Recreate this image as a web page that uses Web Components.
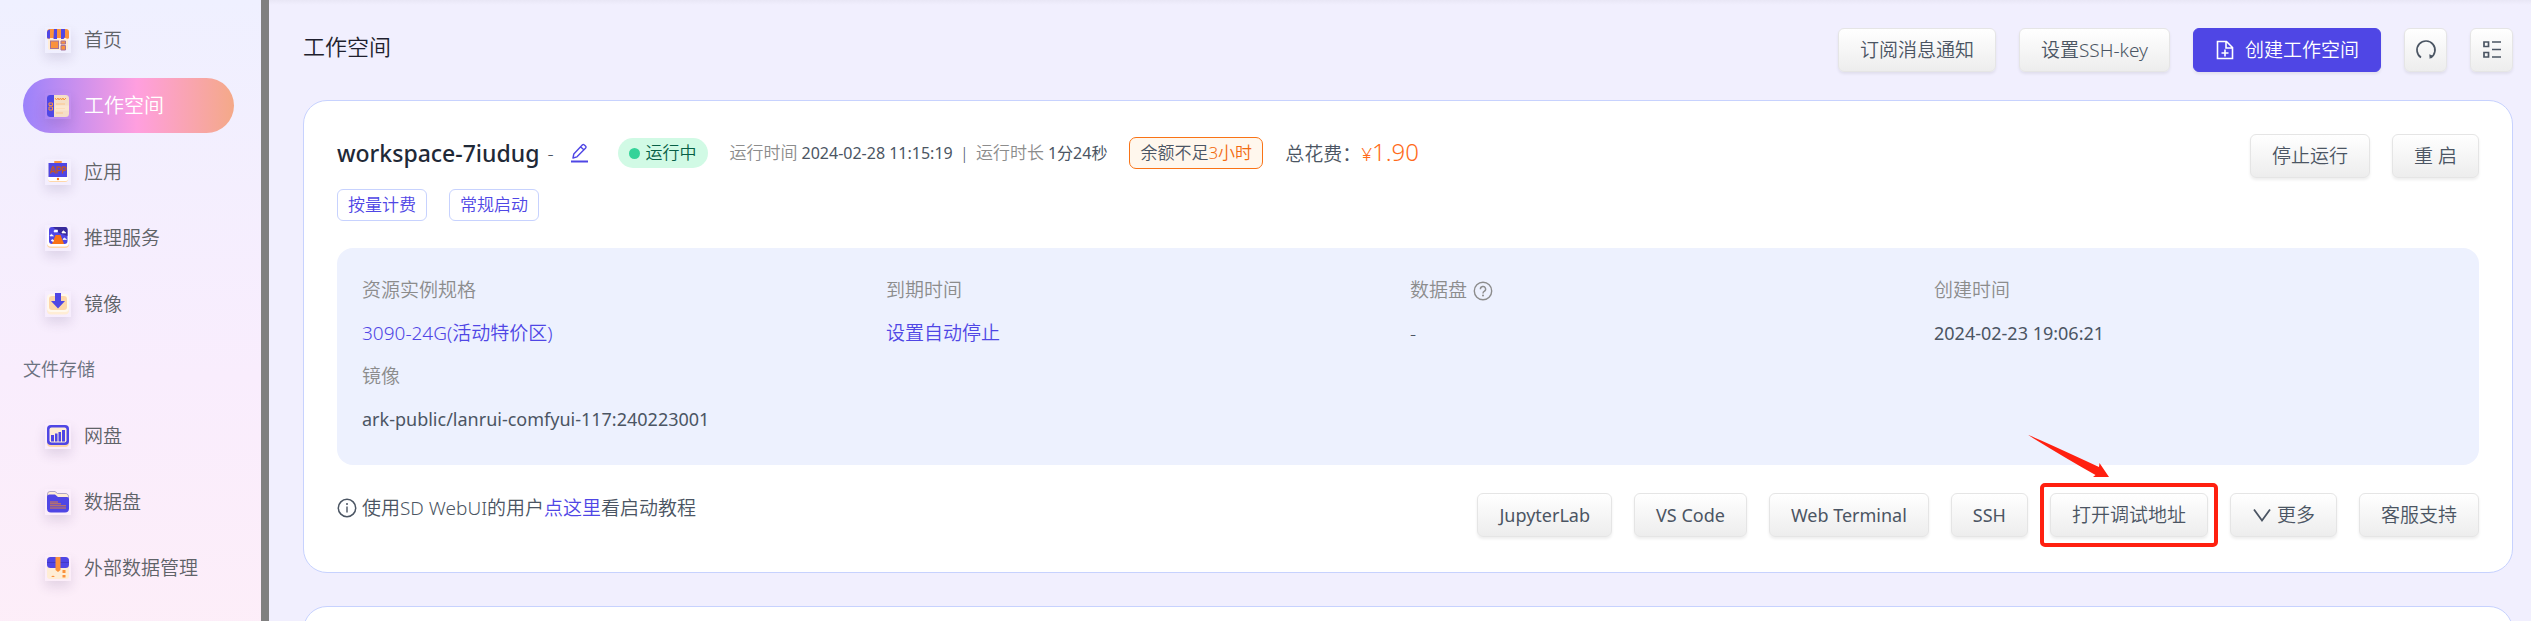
<!DOCTYPE html>
<html lang="zh-CN">
<head>
<meta charset="utf-8">
<title>工作空间</title>
<style>
  html, body { margin: 0; height: 100%; }
  body {
    font-family: "Noto Sans", "Noto Sans CJK SC", sans-serif;
    font-size: 19px; line-height: 28px; font-weight: 350; color: #4b5563;
    --brand: #4f46e5; --line: #c7d2fe; --muted: #8c8c8c;
    overflow: hidden;
  }
</style>
</head>
<body>
<app-shell></app-shell>
<script>
const define = (name, html, setup) => {
  const tpl = document.createElement('template');
  tpl.innerHTML = html;
  customElements.define(name, class extends HTMLElement {
    constructor() {
      super();
      this.attachShadow({ mode: 'open' }).append(tpl.content.cloneNode(true));
    }
    connectedCallback() { if (setup) setup(this, this.shadowRoot); }
  });
};

/* Line icons take the text colour; the menu pictures carry their own. */
const ICONS = {
  store: `<rect x="1" y="6" width="20" height="15" rx="2" fill="#ffedd5"/><path d="M0 9V3a3 3 0 0 1 3-3h16a3 3 0 0 1 3 3v6a2 2 0 0 1-3 0H3a2 2 0 0 1-3 0z" fill="#fb923c"/><path d="M0 3a3 3 0 0 1 3-2.600V9.500H1.500A1.500 1.500 0 0 1 0 8zM7 0h3v10H6.500zM14 0h4v8l-1.500 2H14z" fill="#4f46e5"/><rect x="3.500" y="12" width="8" height="7.500" fill="#fb923c" stroke="#a5739a"/><path d="M14 12h4.500v3H14zM14 16.500h4.500v4.500H14z" fill="#fb923c" stroke="#a5739a"/>`,
  book: `<rect width="22" height="22" rx="3.500" fill="#f5dfc6"/><path d="M3 0h4v22H3a3 3 0 0 1-3-3V3a3 3 0 0 1 3-3z" fill="#4f46e5"/><path d="M2 8h3.500v2.500H2zM2 12h3.500v3H2z" fill="none" stroke="#fb923c"/><path d="M8 3l1.500 2L11 3l1 2 1.500-2 1 2 1.500-2 1 2 2-2" fill="none" stroke="#fb923c"/><path d="M9 9h9M9 13.500h9M9 18h7" stroke="#fbc58e"/><path d="M8 10.500h14v5H8z" fill="#ffedd5" opacity=".6"/>`,
  app: `<rect x="1" y="2" width="20" height="19" rx="3" fill="#fff3e2"/><path d="M1 17h20v1a3 3 0 0 1-3 3H4a3 3 0 0 1-3-3z" fill="#fed7aa"/><path d="M1 16h20v2a2 2 0 0 1-2 2H3a2 2 0 0 1-2-2z" fill="#fff"/><rect x="7" y="0" width="8" height="2" rx="1" fill="#fb923c"/><path d="M1.500 2h18.500v14H1.500z" fill="#4f46e5"/><path d="M3.500 12.500l2-6.500h1l2 6.500M4.500 10.500h3M10 12.500V6h2q2 0 2 1.700T12 9.500h-2M15.500 12.500V6h1.500q2 0 2 1.700t-2 1.800h-1.500" fill="none" stroke="#c2572b" stroke-width="1.300"/><circle cx="11" cy="18" r="1.200" fill="#f97316"/>`,
  infer: `<rect x="0" y="2" width="22" height="19" rx="4" fill="#fed7aa"/><rect x="0" y="1" width="22" height="18.500" rx="4" fill="#fff"/><rect x="2" y="0" width="18.500" height="17" rx="3" fill="#4f46e5"/><path d="M6 0h12a2.500 2.500 0 0 1 2.500 2.500V9L12 6z" fill="#372a9b"/><path d="M8.500 8h5l3.500 9H5z" fill="#f97316"/><path d="M7.500 3h3v2h-3.500zM15 5l1.500-1.200L19 6h-4zM3 8.500l1.500-1.200L6.500 9h-3.500zM16 12l1.500-1 2 1.500h-3.500zM4 13.500l1.500-1 1.500 1.200-1 .8z" fill="#fff" stroke="#fff" stroke-width=".6"/>`,
  image: `<rect y="2" width="22" height="19.500" rx="4" fill="#ffedd5"/><rect width="22" height="18" y="1" rx="4" fill="#fff8ed"/><rect x="2" y="3" width="18" height="14" rx="3" fill="#fed7aa"/><path d="M8 0h6v8h4L11 15.500 4 8h4z" fill="#4f46e5"/>`,
  disk: `<rect y="2" width="22" height="20" rx="4" fill="#fed7aa"/><rect y="0" width="22" height="20" rx="4" fill="#4f46e5"/><rect x="2.500" y="2.500" width="17" height="15" rx="2" fill="#ffedd5"/><path d="M4 10h3v6.500H4zM8 8.500h2.500v8H8zM11.500 7h2.500v9.500h-2.500zM15 5h3v11.500h-3z" fill="#4f46e5"/>`,
  folder: `<path d="M.5 6V3a2.500 2.500 0 0 1 2.500-2.500h5L10.500 2.500H18A3 3 0 0 1 21.500 5.500V9H.500z" fill="#ffedd5" stroke="#8f86b8" stroke-width=".7"/><path d="M0 6a2.500 2.500 0 0 1 2.500-2.500H8L11 6h9a2 2 0 0 1 2 2v9.500a4 4 0 0 1-4 4H4a4 4 0 0 1-4-4z" fill="#4f46e5"/><path d="M3 11h8M3 12.800h11M3 14.800h16M3 17h16" stroke="#e0803f" stroke-width="1"/>`,
  box: `<rect y="6" width="22" height="16" rx="3" fill="#ffedd5"/><rect width="22" height="11" rx="3.500" fill="#4f46e5"/><path d="M0 5.500h22" stroke="#3b2fb0" stroke-width=".6"/><path d="M8.500 0h5v13l-2.500 2-2.500-2z" fill="#fb923c"/><path d="M15.500 13h3v3h-3zM15.500 18h3v2.500h-3zM4 20l2-1.500L8 20z" fill="#fb923c"/>`,
  edit: `<path d="M3 15l.8-4L12.500 1.800q.8-.8 1.600 0l1.600 1.500q.8.8 0 1.600L7 13.800 3 15zM10.800 4l3 2.800" fill="none" stroke="currentColor" stroke-width="1.400" stroke-linejoin="round"/><path d="M1 18.500h17" stroke="currentColor" stroke-width="2"/>`,
  filePlus: `<path d="M2.500 1.500h9l6 6v11h-15zM11 1.500V8h6.500" fill="none" stroke="currentColor" stroke-width="1.600"/><path d="M10 9.500v7M6.500 13h7" stroke="currentColor" stroke-width="1.600"/>`,
  reload: `<path d="M5 17.500A9 9 0 1 1 14.500 17.800" fill="none" stroke="currentColor" stroke-width="1.700"/><path d="M13.300 14.200l3.700 1.600-3.300 3.200z" fill="currentColor"/>`,
  list: `<path d="M2 2h4.500v4.500H2zM2 12.500h4.500V17H2z" fill="none" stroke="currentColor" stroke-width="1.700"/><path d="M10 2h9M10 9.500h9M10 17h9" stroke="currentColor" stroke-width="1.700"/>`,
  info: `<circle cx="10" cy="10" r="8.700" fill="none" stroke="currentColor" stroke-width="1.500"/><path d="M10 8.500v6" stroke="currentColor" stroke-width="1.400"/><circle cx="10" cy="6" r="1" fill="currentColor"/>`,
  help: `<circle cx="10" cy="10" r="8.700" fill="none" stroke="currentColor" stroke-width="1.400"/><path d="M7.400 8.200a2.600 2.600 0 1 1 3.800 2.200q-1.200.6-1.200 2" fill="none" stroke="currentColor" stroke-width="1.400"/><circle cx="10" cy="14.500" r="1" fill="currentColor"/>`,
  down: `<path d="M2 4.500L10 15.500 18 4.500" fill="none" stroke="currentColor" stroke-width="1.800"/>`,
};
const PICTURES = ['store', 'book', 'app', 'infer', 'image', 'disk', 'folder', 'box'];

define('ws-icon', `
<style>
  :host { display: inline-flex; flex: none; width: 20px; height: 20px; }
  svg { width: 100%; height: 100%; display: block; overflow: visible; }
</style>`, (el, root) => {
  const name = el.getAttribute('name');
  const box = PICTURES.includes(name) ? 22 : 20;
  root.innerHTML += `<svg viewBox="0 0 ${box} ${box}" aria-hidden="true">${ICONS[name]}</svg>`;
});

define('nav-item', `
<style>
  :host { display: block; }
  a { display: flex; align-items: center; gap: 13px; height: 55px; padding: 0 22px;
      border-radius: 28px; color: #5f6368; text-decoration: none; }
  .pic { padding: 2px; box-shadow: 0 6px 12px rgba(60, 40, 90, .13); display: flex; }
  ws-icon { width: 22px; height: 22px; }
  :host([active]) a { color: #fff; font-size: 20px;
    background: linear-gradient(90deg, #9b82fb, #ff9fdf 54%, #f4a988); }
</style>
<a href="#"><span class="pic"><ws-icon></ws-icon></span><slot></slot></a>`, (el, root) => {
  const icon = document.createElement('ws-icon');
  icon.setAttribute('name', el.getAttribute('icon'));
  root.querySelector('ws-icon').replaceWith(icon);
  if (el.hasAttribute('active')) root.querySelector('a').setAttribute('aria-current', 'page');
});

define('side-nav', `
<style>
  :host { display: block; box-sizing: border-box; padding: 12px 27px 0 23px; border-right: 8px solid #808080;
    background: linear-gradient(180deg, #eff0ff, #f9edfd 53%, #feeef7); }
  nav { display: flex; flex-direction: column; gap: 11px; }
  h2 { margin: 0; height: 55px; line-height: 55px; font-size: 18px; font-weight: inherit; color: #6b7280; }
</style>
<nav>
  <nav-item icon="store">首页</nav-item>
  <nav-item icon="book" active>工作空间</nav-item>
  <nav-item icon="app">应用</nav-item>
  <nav-item icon="infer">推理服务</nav-item>
  <nav-item icon="image">镜像</nav-item>
  <h2>文件存储</h2>
  <nav-item icon="disk">网盘</nav-item>
  <nav-item icon="folder">数据盘</nav-item>
  <nav-item icon="box">外部数据管理</nav-item>
</nav>`);

define('ws-button', `
<style>
  :host { display: block; flex: none; }
  button { display: flex; align-items: center; justify-content: center; gap: 5px; height: 44px; margin: 0;
    padding: 0 21px; box-sizing: border-box; border: 1px solid #e5e5e5; border-radius: 6px;
    background: linear-gradient(180deg, #fff, #ededed); box-shadow: 0 2px 3px rgba(0, 0, 0, .07);
    font: inherit; color: #4b5563; white-space: nowrap; }
  :host([latin]) button { font-size: 18px; font-weight: 400; }
  :host([primary]) button { gap: 10px; border-color: var(--brand); background: var(--brand); color: #fff; }
  :host([square]) button { width: 43px; padding: 0; }
</style>
<button type="button"><slot></slot></button>`, (el, root) => {
  const label = el.getAttribute('label');
  if (label) root.querySelector('button').setAttribute('aria-label', label);
});

define('ws-tag', `
<style>
  :host { display: block; box-sizing: border-box; height: 32px; line-height: 30px; padding: 0 10px; font-size: 17px;
    border: 1px solid var(--line); border-radius: 6px; color: var(--brand); white-space: nowrap; }
  :host([warning]) { border-color: #f97316; background: #fff7ed; color: #4b5563; border-radius: 7px; }
</style>
<slot></slot>`);

define('status-badge', `
<style>
  :host { display: flex; align-items: center; gap: 6px; height: 30px; padding: 0 11px; border-radius: 15px;
    font-size: 17px; background: #d1fae5; color: #065f46; white-space: nowrap; }
  i { width: 11px; height: 11px; border-radius: 50%; background: #34d399; }
</style>
<i></i><slot></slot>`);

define('detail-field', `
<style>
  :host { display: block; line-height: 43px; }
  dl, dd { margin: 0; }
  dt { display: flex; align-items: center; gap: 6px; color: var(--muted); }
  :host([latin]) dd { font-size: 18px; font-weight: 400; }
</style>
<dl><dt><slot name="label"></slot></dt><dd><slot></slot></dd></dl>`);

/* Frames the slotted control and points an arrow at it. */
define('guide-mark', `
<style>
  :host { display: block; position: relative; }
  .frame { position: absolute; inset: -10px; border: 4px solid #ff2010; border-radius: 5px; pointer-events: none; }
  svg { position: absolute; left: -23px; top: -59px; width: 84px; height: 44px; pointer-events: none; }
</style>
<slot></slot><span class="frame"></span>
<svg viewBox="0 0 84 44" aria-hidden="true"><path d="M1 1Q3 1 72 33L72.500 29 82 43H66L68.500 41Q40 25 1 1Z" fill="#ff2010"/></svg>`);

define('workspace-card', `
<style>
  :host { display: block; }
  article { border: 1px solid var(--line); border-radius: 24px; background: #fff; padding: 33px 33px 35px; }
  .top, .right, .meta, .tags, .bottom, .tip, .run { display: flex; }
  .top { justify-content: space-between; align-items: flex-start; height: 44px; }
  .meta { align-items: center; gap: 22px; height: 38px; white-space: nowrap; }
  .name { display: flex; align-items: center; gap: 8px; margin-right: 6px; }
  h3 { margin: 0; font-size: 23px; font-weight: 500; color: #1f2937; }
  .name a { display: flex; color: var(--brand); margin-left: 8px; }
  .run { font-size: 17px; gap: 4px; }
  .run time { font-size: 16px; font-weight: 400; }
  .run .bar { padding: 0 3px; }
  .dim { color: var(--muted); }
  em { font-style: normal; color: #f26a10; }
  .cost { display: flex; align-items: baseline; color: #4b5563; }
  .cost em { color: #ff6b1a; }
  .cost strong { font-size: 24px; font-weight: inherit; color: #ff6b1a; }
  .right, .tags { gap: 22px; }
  .tags { margin-top: 11px; }
  .panel { display: grid; grid-template-columns: repeat(4, 1fr); margin-top: 27px; padding: 21px 21px 24px 25px;
    border-radius: 16px; background: #edf1fe; }
  .bottom { justify-content: space-between; margin-top: 28px; }
  .tip { align-items: center; gap: 5px; height: 30px; }
  p { margin: 0; }
  a { color: var(--brand); text-decoration: none; }
</style>
<article>
  <div class="top">
    <div class="meta">
      <div class="name"><h3>workspace-7iudug</h3><span>-</span><a href="#" aria-label="编辑名称"><ws-icon name="edit"></ws-icon></a></div>
      <status-badge>运行中</status-badge>
      <div class="run"><span class="dim">运行时间</span><time>2024-02-28 11:15:19</time><span class="bar">|</span><span class="dim">运行时长</span><time>1分24秒</time></div>
      <ws-tag warning>余额不足<em>3小时</em></ws-tag>
      <div class="cost"><span>总花费：</span><em>¥</em><strong>1.90</strong></div>
    </div>
    <div class="right"><ws-button>停止运行</ws-button><ws-button>重 启</ws-button></div>
  </div>
  <div class="tags"><ws-tag>按量计费</ws-tag><ws-tag>常规启动</ws-tag></div>
  <section class="panel">
    <detail-field><span slot="label">资源实例规格</span><a href="#">3090-24G(活动特价区)</a></detail-field>
    <detail-field><span slot="label">到期时间</span><a href="#">设置自动停止</a></detail-field>
    <detail-field><span slot="label">数据盘</span><ws-icon slot="label" name="help"></ws-icon>-</detail-field>
    <detail-field latin><span slot="label">创建时间</span>2024-02-23 19:06:21</detail-field>
    <detail-field latin><span slot="label">镜像</span>ark-public/lanrui-comfyui-117:240223001</detail-field>
  </section>
  <div class="bottom">
    <div class="tip"><ws-icon name="info"></ws-icon><p>使用SD WebUI的用户<a href="#">点这里</a>看启动教程</p></div>
    <div class="right">
      <ws-button latin>JupyterLab</ws-button>
      <ws-button latin>VS Code</ws-button>
      <ws-button latin>Web Terminal</ws-button>
      <ws-button latin>SSH</ws-button>
      <guide-mark><ws-button>打开调试地址</ws-button></guide-mark>
      <ws-button><ws-icon name="down"></ws-icon>更多</ws-button>
      <ws-button>客服支持</ws-button>
    </div>
  </div>
</article>`);

define('page-header', `
<style>
  :host { display: flex; justify-content: space-between; align-items: flex-start; height: 72px; }
  h1 { margin: 0; font-size: 22px; line-height: 36px; font-weight: inherit; color: #1f1f2e; }
  div { display: flex; gap: 23px; }
</style>
<h1>工作空间</h1>
<div>
  <ws-button>订阅消息通知</ws-button>
  <ws-button>设置SSH-key</ws-button>
  <ws-button primary><ws-icon name="filePlus"></ws-icon>创建工作空间</ws-button>
  <ws-button square label="刷新"><ws-icon name="reload"></ws-icon></ws-button>
  <ws-button square label="列表视图"><ws-icon name="list"></ws-icon></ws-button>
</div>`);

define('app-shell', `
<style>
  :host { display: grid; grid-template-columns: 269px 1fr; min-height: 100vh; }
  main { min-width: 0; padding: 28px 18px 0 34px; background: linear-gradient(180deg, #e9e7f6, #f1effe 5px); }
  .next { margin-top: 33px; height: 100px; border: 1px solid var(--line); border-radius: 24px; background: #fff; }
  :host { max-height: 100vh; overflow: hidden; }
</style>
<side-nav></side-nav>
<main>
  <page-header></page-header>
  <workspace-card></workspace-card>
  <section class="next"></section>
</main>`);
</script>
</body>
</html>
